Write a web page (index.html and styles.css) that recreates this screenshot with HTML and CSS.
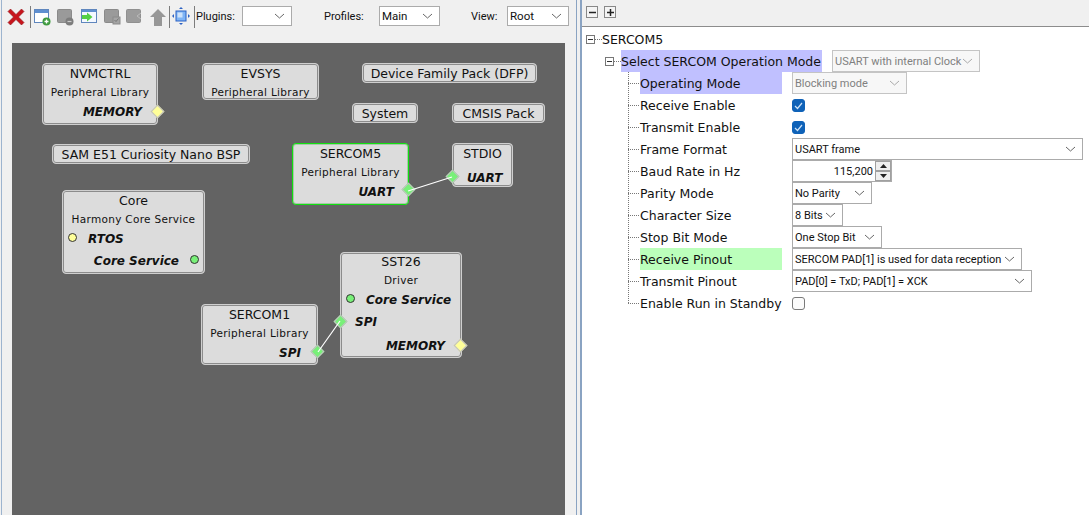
FILE: index.html

```html
<!DOCTYPE html>
<html lang="en">
<head>
    <meta charset="UTF-8">
    <meta name="viewport" content="width=device-width, initial-scale=1.0">
    <title>Project Graph - SERCOM5 Configuration</title>
    <link rel="stylesheet" href="styles.css">
</head>
<body>

    <!-- Project graph pane -->
    <div class="graph-pane">
        <div class="toolbar">
            <svg class="tool tool-close" width="18" height="18" viewBox="0 0 18 18"><path d="M1 3.5 3.5 1 9 6.5 14.5 1 17 3.5 11.5 9 17 14.5 14.5 17 9 11.5 3.5 17 1 14.5 6.5 9z" fill="#c8141c" stroke="#8e1a1e" stroke-width=".6"/></svg>
            <span class="tool-sep sep-a"></span>
            <svg class="tool tool-new" width="17" height="17" viewBox="0 0 17 17"><rect x=".5" y=".5" width="14" height="13" fill="#fff" stroke="#5f86bd"/><rect x="1" y="1" width="13" height="3" fill="#5f8fd0"/><circle cx="12.5" cy="12.5" r="4" fill="#3f9a3f"/><path d="M10.5 12.5h4M12.5 10.5v4" stroke="#fff" stroke-width="1.3"/></svg>
            <svg class="tool tool-off" width="17" height="17" viewBox="0 0 17 17"><rect x=".5" y=".5" width="14" height="13" rx="1" fill="#9a9a9a" stroke="#8a8a8a"/><circle cx="12.5" cy="12.5" r="4" fill="#7d7d7d"/><path d="M10.5 12.5h4" stroke="#ccc" stroke-width="1.2"/></svg>
            <svg class="tool tool-import" width="16" height="14" viewBox="0 0 16 14"><rect x=".5" y=".5" width="15" height="13" fill="#f4f8ff" stroke="#5f86bd"/><rect x="1" y="1" width="14" height="2" fill="#5f8fd0"/><path d="M1 6h5V3.5L11.5 8 6 12.500V10H1z" fill="#55cf45"/></svg>
            <svg class="tool tool-off-b" width="17" height="16" viewBox="0 0 17 16"><rect x=".5" y=".5" width="14" height="13" rx="1" fill="#9a9a9a" stroke="#8a8a8a"/><rect x="9" y="8" width="7" height="7" fill="#a4a4a4" stroke="#8a8a8a"/><path d="M10.5 11l1.5 1.5 2.500-3" fill="none" stroke="#777"/></svg>
            <svg class="tool tool-off-c" width="16" height="14" viewBox="0 0 16 14"><rect x=".5" y=".5" width="14" height="13" rx="1" fill="#9c9c9c" stroke="#909090"/><path d="M15 4 11 7l4 3" fill="none" stroke="#bbb"/></svg>
            <svg class="tool tool-up" width="16" height="17" viewBox="0 0 16 17"><path d="M8 0 16 8h-4v9H4V8H0z" fill="#979797"/></svg>
            <span class="tool-sep sep-b"></span>
            <svg class="tool tool-fit" width="18" height="18" viewBox="0 0 18 18"><rect x="4" y="4" width="10" height="10" fill="#7fb4f5" stroke="#2d62c4"/><rect x="5.5" y="5.5" width="5" height="5" fill="#cfe3fb"/><path d="M9 0l2 2H7zM9 18l-2-2h4zM0 9l2-2v4zM18 9l-2 2V7z" fill="#2d62c4"/></svg>
            <span class="tool-sep sep-c"></span>
            <span class="tool-label label-plugins">Plugins:</span>
            <div class="combo combo-plugins"><span class="combo-text"></span><svg class="chevron" width="11" height="6" viewBox="0 0 11 6"><path d="M1 1l4.500 4L10 1" fill="none" stroke="#666"/></svg></div>
            <span class="tool-label label-profiles">Profiles:</span>
            <div class="combo combo-profiles"><span class="combo-text">Main</span><svg class="chevron" width="11" height="6" viewBox="0 0 11 6"><path d="M1 1l4.500 4L10 1" fill="none" stroke="#666"/></svg></div>
            <span class="tool-label label-view">View:</span>
            <div class="combo combo-view"><span class="combo-text">Root</span><svg class="chevron" width="11" height="6" viewBox="0 0 11 6"><path d="M1 1l4.500 4L10 1" fill="none" stroke="#666"/></svg></div>
        </div>

        <div class="canvas">
            <div class="node node-nvmctrl">
                <div class="node-title">NVMCTRL</div>
                <div class="node-sub">Peripheral Library</div>
                <div class="node-port port-out">MEMORY</div>
                <span class="pin diamond yellow"></span>
            </div>
            <div class="node node-evsys">
                <div class="node-title">EVSYS</div>
                <div class="node-sub">Peripheral Library</div>
            </div>
            <div class="node pill node-dfp">Device Family Pack (DFP)</div>
            <div class="node pill node-system">System</div>
            <div class="node pill node-cmsis">CMSIS Pack</div>
            <div class="node pill node-bsp">SAM E51 Curiosity Nano BSP</div>

            <div class="node node-core">
                <div class="node-title">Core</div>
                <div class="node-sub">Harmony Core Service</div>
                <div class="node-port port-in">RTOS</div>
                <div class="node-port port-out port-wide">Core Service</div>
                <span class="pin dot yellow"></span>
                <span class="pin dot green"></span>
            </div>

            <div class="node node-sercom5">
                <div class="node-title">SERCOM5</div>
                <div class="node-sub">Peripheral Library</div>
                <div class="node-port port-out">UART</div>
                <span class="pin diamond green"></span>
            </div>
            <div class="node node-stdio">
                <div class="node-title">STDIO</div>
                <div class="node-port port-in">UART</div>
                <span class="pin diamond green"></span>
            </div>

            <div class="node node-sst26">
                <div class="node-title">SST26</div>
                <div class="node-sub">Driver</div>
                <div class="node-port port-in">Core Service</div>
                <div class="node-port port-in port-spi">SPI</div>
                <div class="node-port port-out port-memory">MEMORY</div>
                <span class="pin dot green"></span>
                <span class="pin diamond green"></span>
                <span class="pin diamond yellow"></span>
            </div>
            <div class="node node-sercom1">
                <div class="node-title">SERCOM1</div>
                <div class="node-sub">Peripheral Library</div>
                <div class="node-port port-out">SPI</div>
                <span class="pin diamond green"></span>
            </div>

            <svg class="wires" width="553" height="472" viewBox="0 0 553 472">
                <path d="M396 148 440 134M306 309 328 278" fill="none" stroke="#fff" stroke-width="1.2"/>
            </svg>
        </div>
    </div>

    <!-- Configuration options pane -->
    <div class="options-pane">
        <div class="options-bar">
            <span class="bar-btn"><svg width="9" height="9" viewBox="0 0 9 9"><path d="M1 4.500h7" stroke="#222" stroke-width="1.500"/></svg></span>
            <span class="bar-btn"><svg width="9" height="9" viewBox="0 0 9 9"><path d="M1 4.500h7M4.500 1v7" stroke="#222" stroke-width="1.500"/></svg></span>
        </div>

        <div class="tree">
            <div class="tree-row row-root">
                <span class="expander"></span>
                <span class="stub"></span>
                <span class="tree-label">SERCOM5</span>
            </div>
            <div class="tree-row row-group">
                <span class="expander"></span>
                <span class="stub"></span>
                <span class="tree-label hl-blue">Select SERCOM Operation Mode</span>
                <div class="combo combo-disabled combo-mode"><span class="combo-text">USART with internal Clock</span><svg class="chevron" width="11" height="6" viewBox="0 0 11 6"><path d="M1 1l4.500 4L10 1" fill="none" stroke="#aaa"/></svg></div>
            </div>

            <div class="tree-row">
                <span class="guide"></span>
                <span class="opt-label hl-blue">Operating Mode</span>
                <div class="combo combo-disabled w-blocking"><span class="combo-text">Blocking mode</span><svg class="chevron" width="11" height="6" viewBox="0 0 11 6"><path d="M1 1l4.500 4L10 1" fill="none" stroke="#aaa"/></svg></div>
            </div>
            <div class="tree-row">
                <span class="guide"></span>
                <span class="opt-label">Receive Enable</span>
                <span class="check checked"><svg width="9" height="8" viewBox="0 0 9 8"><path d="M1 4l2.500 2.500L8 1" fill="none" stroke="#cfe3f7" stroke-width="1.200"/></svg></span>
            </div>
            <div class="tree-row">
                <span class="guide"></span>
                <span class="opt-label">Transmit Enable</span>
                <span class="check checked"><svg width="9" height="8" viewBox="0 0 9 8"><path d="M1 4l2.500 2.500L8 1" fill="none" stroke="#cfe3f7" stroke-width="1.200"/></svg></span>
            </div>
            <div class="tree-row">
                <span class="guide"></span>
                <span class="opt-label">Frame Format</span>
                <div class="combo w-frame"><span class="combo-text">USART frame</span><svg class="chevron" width="11" height="6" viewBox="0 0 11 6"><path d="M1 1l4.500 4L10 1" fill="none" stroke="#666"/></svg></div>
            </div>
            <div class="tree-row">
                <span class="guide"></span>
                <span class="opt-label">Baud Rate in Hz</span>
                <div class="spinner">
                    <span class="spin-value">115,200</span>
                    <span class="spin-btns">
                        <span class="spin-btn"><svg width="7" height="4" viewBox="0 0 7 4"><path d="M3.500 0 7 4H0z" fill="#222"/></svg></span>
                        <span class="spin-btn"><svg width="7" height="4" viewBox="0 0 7 4"><path d="M3.500 4 0 0h7z" fill="#222"/></svg></span>
                    </span>
                </div>
            </div>
            <div class="tree-row">
                <span class="guide"></span>
                <span class="opt-label">Parity Mode</span>
                <div class="combo w-parity"><span class="combo-text">No Parity</span><svg class="chevron" width="11" height="6" viewBox="0 0 11 6"><path d="M1 1l4.500 4L10 1" fill="none" stroke="#666"/></svg></div>
            </div>
            <div class="tree-row">
                <span class="guide"></span>
                <span class="opt-label">Character Size</span>
                <div class="combo w-size"><span class="combo-text">8 Bits</span><svg class="chevron" width="11" height="6" viewBox="0 0 11 6"><path d="M1 1l4.500 4L10 1" fill="none" stroke="#666"/></svg></div>
            </div>
            <div class="tree-row">
                <span class="guide"></span>
                <span class="opt-label">Stop Bit Mode</span>
                <div class="combo w-stop"><span class="combo-text">One Stop Bit</span><svg class="chevron" width="11" height="6" viewBox="0 0 11 6"><path d="M1 1l4.500 4L10 1" fill="none" stroke="#666"/></svg></div>
            </div>
            <div class="tree-row">
                <span class="guide"></span>
                <span class="opt-label hl-green">Receive Pinout</span>
                <div class="combo w-rx"><span class="combo-text">SERCOM PAD[1] is used for data reception</span><svg class="chevron" width="11" height="6" viewBox="0 0 11 6"><path d="M1 1l4.500 4L10 1" fill="none" stroke="#666"/></svg></div>
            </div>
            <div class="tree-row">
                <span class="guide"></span>
                <span class="opt-label">Transmit Pinout</span>
                <div class="combo w-tx"><span class="combo-text">PAD[0] = TxD; PAD[1] = XCK</span><svg class="chevron" width="11" height="6" viewBox="0 0 11 6"><path d="M1 1l4.500 4L10 1" fill="none" stroke="#666"/></svg></div>
            </div>
            <div class="tree-row">
                <span class="guide guide-last"></span>
                <span class="opt-label">Enable Run in Standby</span>
                <span class="check"></span>
            </div>
        </div>
    </div>

</body>
</html>
```

FILE: styles.css

```css
html, body {
    margin: 0;
    height: 100%;
    overflow: hidden;
}

body {
    display: flex;
    height: 515px;
    background-color: #f0f0f0;
    font-family: "DejaVu Sans", sans-serif;
    color: #111;
}

/* Left pane */
.graph-pane {
    width: 574px;
    margin-left: 1px;
    border-left: 1px solid #9db4cf;
    border-right: 1px solid #8aa3c2;
    display: flex;
    flex-direction: column;
}

.toolbar {
    height: 43px;
    display: flex;
    align-items: flex-start;
    box-sizing: border-box;
    padding-left: 5px;
    font-family: Roboto, sans-serif;
    font-size: 11px;
}

.tool { flex: none; margin-top: 9px; }
.tool-close { margin-top: 8px; }
.tool-new { margin-left: 3px; }
.tool-off { margin-left: 6px; }
.tool-import { margin-left: 7px; }
.tool-off-b { margin-left: 7px; }
.tool-off-c { margin-left: 5px; }
.tool-up { margin-left: 8px; }
.tool-fit { margin-left: 2px; margin-top: 7px; }

.tool-sep {
    flex: none;
    width: 1px;
    height: 22px;
    margin-top: 6px;
    background-color: #7c7c7c;
}

.sep-a { margin-left: 5px; }
.sep-b { margin-left: 3px; }
.sep-c { margin-left: 4px; }

.tool-label { margin-top: 10px; flex: none; }
.label-plugins { margin-left: 1px; width: 46px; }
.label-profiles { margin-left: 32px; width: 55px; }
.label-view { margin-left: 31px; width: 36px; }

.combo {
    flex: none;
    box-sizing: border-box;
    height: 22px;
    display: flex;
    align-items: center;
    justify-content: space-between;
    padding: 0 6px 0 2px;
    background-color: #fff;
    border: 1px solid #ababab;
    font-family: Roboto, sans-serif;
    font-size: 11px;
    white-space: nowrap;
}

.toolbar .combo { margin-top: 6px; height: 20px; font-size: 11.5px; }
.combo-plugins { width: 50px; }
.combo-profiles { width: 61px; }
.combo-view { width: 62px; }

.combo-disabled {
    background-color: #f7f7f7;
    border-color: #c4c4c4;
    color: #808080;
}

.canvas {
    position: relative;
    flex: 1;
    width: 553px;
    margin-left: 10px;
    background-color: #636363;
}

/* Canvas coordinates are relative to the dark area (12,43) */
.node {
    position: absolute;
    box-sizing: border-box;
    background-color: #dcdcdc;
    border: 1px solid #cfcfcf;
    border-radius: 4px;
    box-shadow: inset 0 0 0 1px #8c8c8c;
    text-align: center;
    font-size: 12.5px;
}

.pill {
    line-height: 19px;
    white-space: nowrap;
}

.node-title {
    height: 18px;
    line-height: 18px;
    margin-top: 1px;
    font-size: 12.5px;
}

.node-sub {
    height: 19px;
    line-height: 19px;
    font-size: 10.5px;
    letter-spacing: .3px;
    white-space: nowrap;
}

.node-port {
    height: 19px;
    line-height: 21px;
    font-size: 12px;
    font-weight: bold;
    font-style: italic;
    white-space: nowrap;
}

.port-in { text-align: left; }
.port-out { text-align: right; }
.port-wide { height: 22px; line-height: 27px; padding-right: 25px; }
.port-spi { height: 22px; line-height: 27px; padding-left: 14px; }
.port-memory { height: 24px; line-height: 31px; padding-right: 16px; }

.node-nvmctrl { left: 30px; top: 20px; width: 116px; height: 62px; }
.node-nvmctrl .port-out { padding-right: 15px; }
.node-nvmctrl .pin { right: -5px; top: 43px; }

.node-evsys { left: 190px; top: 20px; width: 117px; height: 37px; }
.node-dfp { left: 350px; top: 20px; width: 175px; height: 20px; }
.node-system { left: 340px; top: 60px; width: 66px; height: 20px; }
.node-cmsis { left: 440px; top: 60px; width: 93px; height: 20px; }
.node-bsp { left: 40px; top: 101px; width: 198px; height: 20px; }

.node-core { left: 50px; top: 147px; width: 143px; height: 84px; }
.node-core .port-in { padding-left: 25px; }
.node-core .dot.yellow { left: 5px; top: 42px; }
.node-core .dot.green { right: 5px; top: 64px; }

.node-sercom5 {
    left: 280px;
    top: 100px;
    width: 117px;
    height: 62px;
    border: 1px solid #10e010;
    box-shadow: inset 0 0 0 1px #a8c8a8;
}
.node-sercom5 .port-out { padding-right: 14px; }
.node-sercom5 .pin { right: -5px; top: 41px; }

.node-stdio { left: 440px; top: 100px; width: 61px; height: 44px; }
.node-stdio .node-title { margin-bottom: 5px; }
.node-stdio .port-in { padding-left: 14px; }
.node-stdio .pin { left: -5px; top: 28px; }

.node-sst26 { left: 328px; top: 209px; width: 122px; height: 106px; }
.node-sst26 .node-title { margin-top: 0; }
.node-sst26 .port-in:not(.port-spi) { padding-left: 25px; }
.node-sst26 .dot { left: 5px; top: 41px; }
.node-sst26 .diamond.green { left: -5px; top: 64px; }
.node-sst26 .diamond.yellow { right: -4px; top: 88px; }

.node-sercom1 { left: 189px; top: 261px; width: 117px; height: 61px; }
.node-sercom1 .port-out { padding-right: 16px; }
.node-sercom1 .pin { right: -5px; top: 42px; }

.pin {
    position: absolute;
    box-sizing: border-box;
    width: 9px;
    height: 9px;
    border: 1px solid #c0c0c0;
}

.diamond { transform: rotate(45deg) scale(1.1); }
.dot { border-radius: 50%; border-color: #333; }
.yellow { background-color: #ffff99; }
.green { background-color: #78f078; }

.wires {
    position: absolute;
    left: 0;
    top: 0;
    pointer-events: none;
}

/* Right pane */
.options-pane {
    flex: 1;
    margin-left: 3px;
    border-left: 2px solid #8aa3c2;
    display: flex;
    flex-direction: column;
    min-width: 0;
}

.options-bar {
    height: 27px;
    box-sizing: border-box;
    display: flex;
    gap: 6px;
    padding: 6px 0 0 4px;
    background-color: #f0f0f0;
    border-bottom: 1px solid #8c8c8c;
}

.bar-btn {
    box-sizing: border-box;
    width: 12px;
    height: 12px;
    display: flex;
    align-items: center;
    justify-content: center;
    border: 1px solid #888;
    background-color: #f4f4f4;
}

.tree {
    flex: 1;
    background-color: #fff;
    padding-top: 1px;
    font-size: 12.5px;
    color: #111;
}

.tree-row {
    height: 22px;
    display: flex;
    align-items: center;
    white-space: nowrap;
}

.row-root { padding-left: 4px; }
.row-group { padding-left: 23px; }

.expander {
    flex: none;
    box-sizing: border-box;
    width: 9px;
    height: 9px;
    border: 1px solid #777;
    background: linear-gradient(#333, #333) center / 5px 1px no-repeat;
}

.stub {
    flex: none;
    width: 7px;
    height: 1px;
    background: repeating-linear-gradient(90deg, #777 0 1px, transparent 1px 2px);
}

.tree-label {
    height: 22px;
    line-height: 24px;
    padding-right: 1px;
}

.guide {
    flex: none;
    width: 12px;
    height: 22px;
    margin-left: 46px;
    background:
        repeating-linear-gradient(180deg, #777 0 1px, transparent 1px 2px) left top / 1px 100% no-repeat,
        repeating-linear-gradient(90deg, #777 0 1px, transparent 1px 2px) left center / 100% 1px no-repeat;
}

.guide-last {
    background:
        repeating-linear-gradient(180deg, #777 0 1px, transparent 1px 2px) left top / 1px 50% no-repeat,
        repeating-linear-gradient(90deg, #777 0 1px, transparent 1px 2px) left center / 100% 1px no-repeat;
}

.opt-label {
    flex: none;
    width: 142px;
    height: 22px;
    line-height: 24px;
    margin-right: 10px;
}

.hl-blue { background-color: #c0c0ff; }
.hl-green { background-color: #bbffbb; }

.combo-mode { width: 148px; margin-left: 10px; }
.w-blocking { width: 115px; }
.w-frame { width: 291px; }
.w-parity { width: 80px; }
.w-size { width: 51px; }
.w-stop { width: 90px; }
.w-rx { width: 230px; }
.w-tx { width: 240px; }

.check {
    box-sizing: border-box;
    width: 13px;
    height: 13px;
    display: flex;
    align-items: center;
    justify-content: center;
    margin-top: 1px;
    border: 1px solid #7a7a7a;
    border-radius: 3px;
    background-color: #fbfbfb;
}

.checked {
    background-color: #0f62b8;
    border-color: #0f62b8;
}

.spinner {
    box-sizing: border-box;
    width: 100px;
    height: 22px;
    display: flex;
    align-items: center;
    border: 1px solid #ababab;
    background-color: #fff;
    font-family: Roboto, sans-serif;
    font-size: 11px;
}

.spin-value {
    flex: 1;
    text-align: right;
    padding-right: 2px;
}

.spin-btns {
    flex: none;
    width: 16px;
    height: 20px;
    display: flex;
    flex-direction: column;
}

.spin-btn {
    flex: 1;
    display: flex;
    align-items: center;
    justify-content: center;
    background-color: #efefef;
    border: 1px solid #a0a0a0;
}
```
